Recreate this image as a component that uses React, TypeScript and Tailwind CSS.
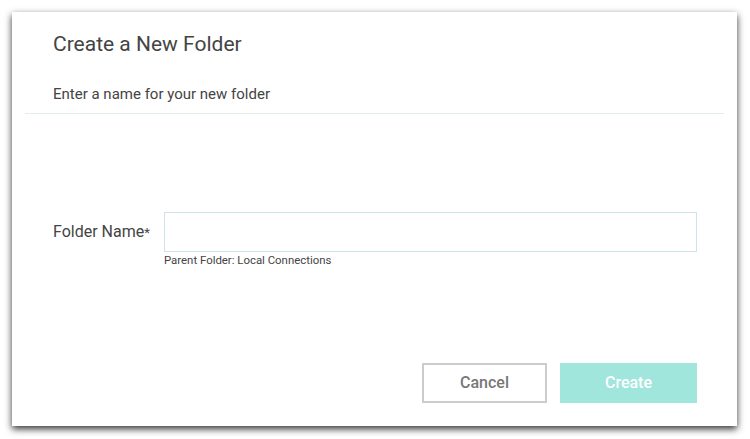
import React from "react";

export default function App() {
	return (
		<div className="h-[439px] w-[750px] bg-white pl-[12px] pt-[12px] font-['Roboto',sans-serif]">
			{/* dialog */}
			<div className="flex h-[414px] w-[725px] flex-col bg-white shadow-[0_3px_7px_rgba(0,0,0,0.8)]">
				{/* header */}
				<div className="px-[41px] pt-[19px]">
					<h2 className="text-[21px] leading-[26px] text-[#444]">Create a New Folder</h2>
					<p className="mt-[27px] text-[15px] leading-[20px] text-[#444]">
						Enter a name for your new folder
					</p>
				</div>
				<div className="mx-[13px] mt-[9px] h-px bg-[#e4eded]" />

				{/* body */}
				<div className="mt-[98px] flex items-center pl-[41px] pr-[40px]">
					<label className="w-[111px] text-[16px] text-[#444]">
						Folder Name<span className="text-[13px]">*</span>
					</label>
					<input
						type="text"
						className="h-[40px] flex-1 border border-[#cce4ee] bg-white px-3 text-[15px] outline-none"
					/>
				</div>
				<div className="pl-[152px] pt-[1px] text-[11.4px] leading-[14px] text-[#444]">
					Parent Folder: Local Connections
				</div>

				{/* footer */}
				<div className="mt-auto mb-[23px] flex justify-end gap-[13px] pr-[40px]">
					<button className="h-[40px] w-[125px] border-2 border-[#c9cdd0] bg-white text-[16px] font-medium text-[#777]">
						Cancel
					</button>
					<button className="h-[40px] w-[137px] bg-[#a1e6dd] text-[16px] font-medium text-white">
						Create
					</button>
				</div>
			</div>
		</div>
	);
}
